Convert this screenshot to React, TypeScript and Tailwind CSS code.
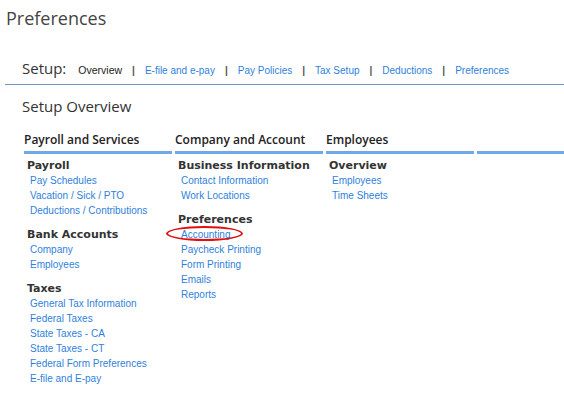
import React from 'react';

type Section = { title: string; links: string[]; circled?: string };
type Column = { title: string; sections: Section[] };

const NAV = ['E-file and e-pay', 'Pay Policies', 'Tax Setup', 'Deductions', 'Preferences'];

const COLUMNS: Column[] = [
  {
    title: 'Payroll and Services',
    sections: [
      { title: 'Payroll', links: ['Pay Schedules', 'Vacation / Sick / PTO', 'Deductions / Contributions'] },
      { title: 'Bank Accounts', links: ['Company', 'Employees'] },
      {
        title: 'Taxes',
        links: ['General Tax Information', 'Federal Taxes', 'State Taxes - CA', 'State Taxes - CT', 'Federal Form Preferences', 'E-file and E-pay'],
      },
    ],
  },
  {
    title: 'Company and Account',
    sections: [
      { title: 'Business Information', links: ['Contact Information', 'Work Locations'] },
      { title: 'Preferences', links: ['Accounting', 'Paycheck Printing', 'Form Printing', 'Emails', 'Reports'], circled: 'Accounting' },
    ],
  },
  {
    title: 'Employees',
    sections: [{ title: 'Overview', links: ['Employees', 'Time Sheets'] }],
  },
  { title: '', sections: [] },
];

function Separator() {
  return <span className="px-[10px] text-[#555] font-bold text-[10px]">|</span>;
}

function LinkRow({ label, circled }: { label: string; circled: boolean }) {
  return (
    <div className="relative h-[15px] leading-[15px] pl-[3px]">
      <a className="text-[#2f7fdc] cursor-pointer">{label}</a>
      {circled && (
        <span className="absolute left-[-12px] top-[-1px] w-[77px] h-[15px] rounded-[50%] border-2 border-[#e01010] pointer-events-none" />
      )}
    </div>
  );
}

export default function App() {
  return (
    <div className="w-[564px] h-[416px] bg-white overflow-hidden font-['Liberation_Sans',Arial,sans-serif] text-[10px]">
      <h1 className="pl-[6px] pt-[6px] text-[18px] leading-[24px] text-[#444] font-['Open_Sans',sans-serif]">Preferences</h1>

      {/* setup navigation */}
      <div className="mt-[27px] ml-[5px] border-b border-[#7096c8] pl-[17px] pb-[4px] flex items-baseline">
        <span className="text-[15px] text-[#333] font-['Open_Sans',sans-serif] mr-[12px]">Setup:</span>
        <span className="text-[10.5px] text-[#222]">Overview</span>
        {NAV.map((item) => (
          <React.Fragment key={item}>
            <Separator />
            <a className="text-[#2f7fdc] cursor-pointer">{item}</a>
          </React.Fragment>
        ))}
      </div>

      <h2 className="pl-[22px] mt-[11px] text-[15px] leading-[20px] text-[#333] font-['Open_Sans',sans-serif]">Setup Overview</h2>

      <div className="mt-[16px] pl-[24px] flex gap-[3px]">
        {COLUMNS.map((col, i) => (
          <div key={i} className={i === 3 ? 'w-[100px] shrink-0' : 'w-[148px] shrink-0'}>
            <div className="h-[19px] text-[12px] leading-[16px] font-semibold text-[#222] font-['Open_Sans',sans-serif] whitespace-nowrap">
              {col.title}
            </div>
            <div className="h-[3px] bg-[#6faae6]" />
            <div className="pt-[4px] pl-[3px]">
              {col.sections.map((sec) => (
                <div key={sec.title} className="mb-[9px]">
                  <div className="h-[15px] leading-[15px] text-[11px] font-bold text-[#333] font-['DejaVu_Sans',Verdana,sans-serif] whitespace-nowrap">
                    {sec.title}
                  </div>
                  {sec.links.map((l) => (
                    <LinkRow key={l} label={l} circled={sec.circled === l} />
                  ))}
                </div>
              ))}
            </div>
          </div>
        ))}
      </div>
    </div>
  );
}
